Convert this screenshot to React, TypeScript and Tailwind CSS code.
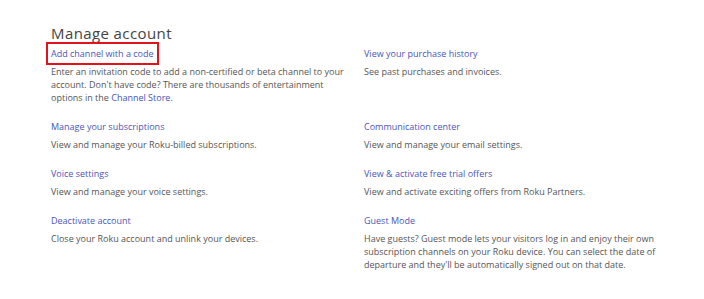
const items: { title: string; desc: React.ReactNode; boxed?: boolean }[] = [
  {
    title: 'Add channel with a code',
    boxed: true,
    desc: (
      <>
        Enter an invitation code to add a non-certified or beta channel to your account. Don't have code? There are
        thousands of entertainment options in the <a className="text-[#4653b8]">Channel Store</a>.
      </>
    ),
  },
  { title: 'View your purchase history', desc: 'See past purchases and invoices.' },
  { title: 'Manage your subscriptions', desc: 'View and manage your Roku-billed subscriptions.' },
  { title: 'Communication center', desc: 'View and manage your email settings.' },
  { title: 'Voice settings', desc: 'View and manage your voice settings.' },
  { title: 'View & activate free trial offers', desc: 'View and activate exciting offers from Roku Partners.' },
  { title: 'Deactivate account', desc: 'Close your Roku account and unlink your devices.' },
  {
    title: 'Guest Mode',
    desc: "Have guests? Guest mode lets your visitors log in and enjoy their own subscription channels on your Roku device. You can select the date of departure and they'll be automatically signed out on that date.",
  },
];

export default function App() {
  return (
    <div className="w-[704px] h-[299px] bg-white pl-[51px] pt-[25px] font-['Open_Sans','Lato',sans-serif]">
      <h2 className="text-[15px] leading-[16px] text-[#444] tracking-[0.4px]">Manage account</h2>
      <div className="grid grid-cols-[313px_313px] mt-[6px]">
        {items.map((it) => (
          <div key={it.title} className="pb-[16px] pr-[10px]">
            <div className="h-[13px] flex items-center">
              <a
                className={
                  'text-[9px] leading-[13px] text-[#4a56b8] ' +
                  (it.boxed ? 'outline-2 outline-[#e3121b] outline-offset-[3px]' : '')
                }
              >
                {it.title}
              </a>
            </div>
            <p className="mt-[5px] text-[9px] leading-[13px] text-[#555] w-[300px]">{it.desc}</p>
          </div>
        ))}
      </div>
    </div>
  );
}
